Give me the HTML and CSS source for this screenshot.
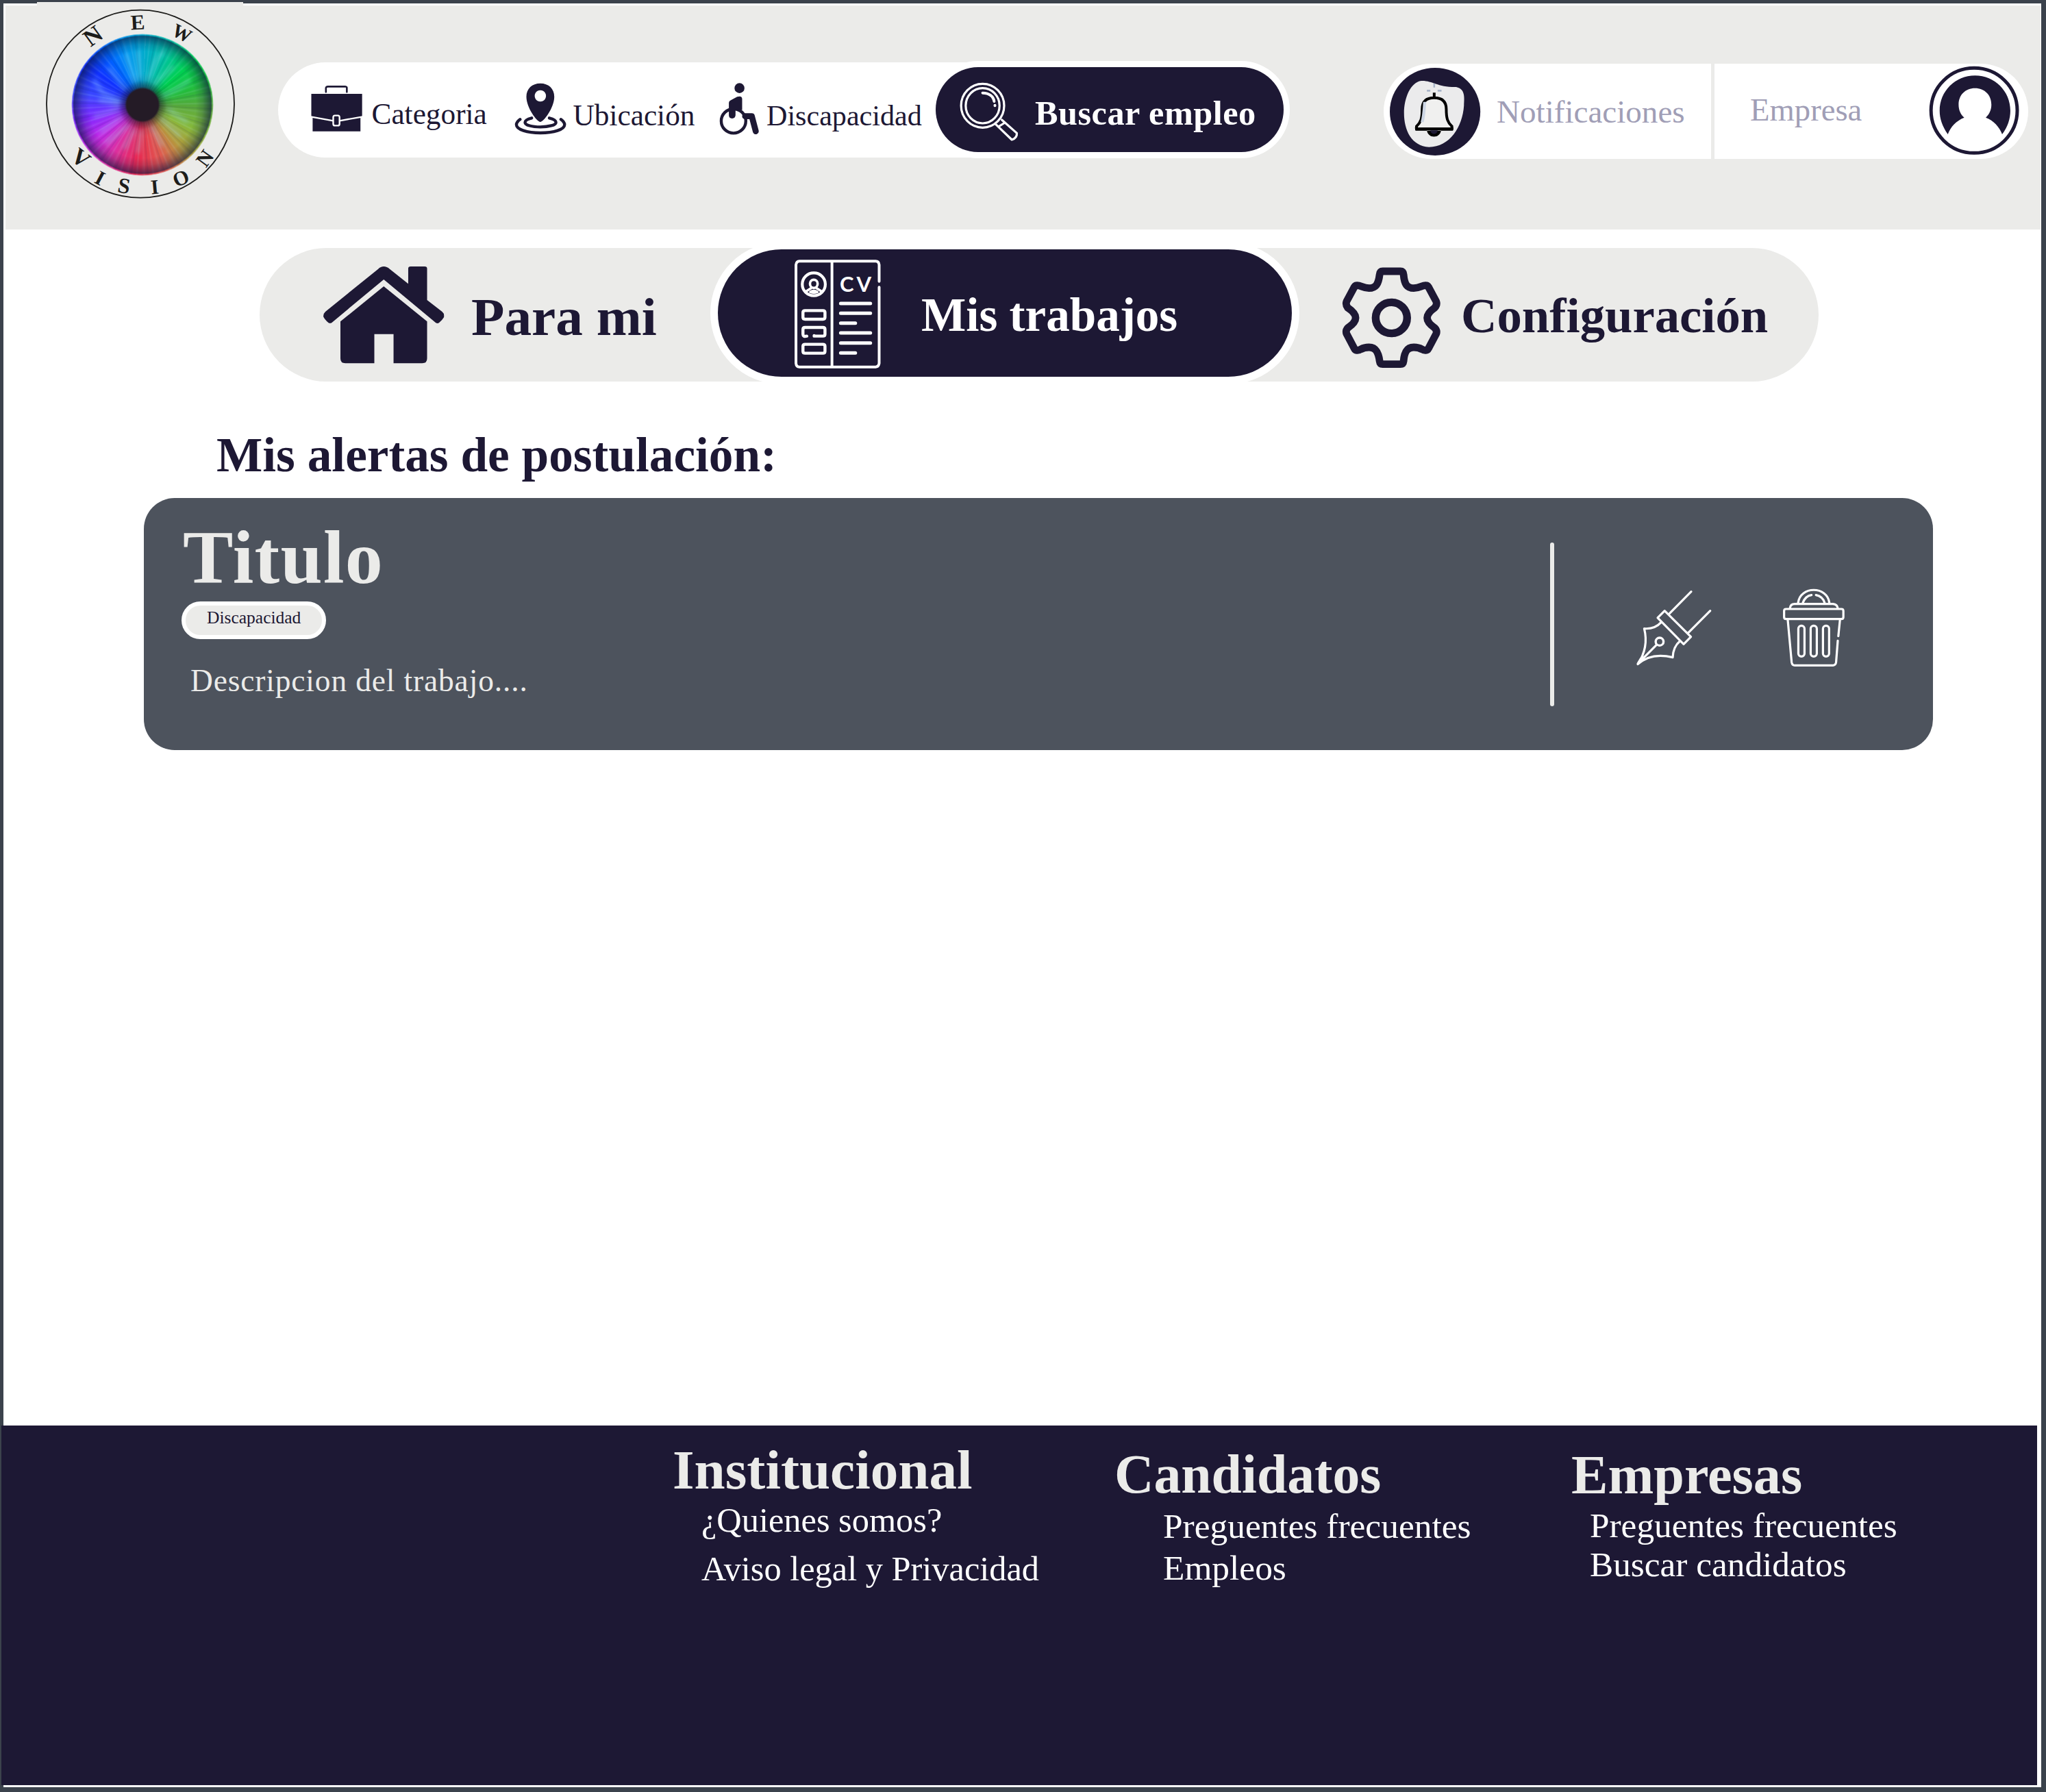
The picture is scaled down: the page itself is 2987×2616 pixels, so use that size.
FILE: index.html
```html
<!DOCTYPE html>
<html lang="es">
<head>
<meta charset="utf-8">
<title>New Vision - Mis trabajos</title>
<link rel="stylesheet" href="styles.css">
</head>
<body>
<div class="page">
  <header class="header">
    <a class="logo">
      <span class="iris"></span>
      <svg class="logo-ring" width="301" height="332" viewBox="54 3 301 332">
        <circle cx="205" cy="151.7" r="137" fill="none" stroke="#1c1c1a" stroke-width="1.8"/>
        <g class="iris-fibers">
          <path d="M196 118L184 80M204 114L201 76M216 116L228 88L238 76M226 122L252 98M238 140L262 128L276 118M246 160L272 178M236 174L262 198M222 186L236 212M206 192L201 222M196 190L182 216M186 184L156 208M176 172L148 192M172 160L138 170M174 148L150 136L138 118M182 130L160 100M172 152L146 146"/>
        </g>
        <g class="logo-letters">
          <text transform="translate(136 53) rotate(-36)" y="11" font-size="35">N</text>
          <text transform="translate(201 33) rotate(-3)" y="10" font-size="31">E</text>
          <text transform="translate(266 48) rotate(27)" y="10" font-size="28">W</text>
          <text transform="translate(118 231) rotate(38)" y="11" font-size="34">V</text>
          <text transform="translate(146 260) rotate(28)" y="10">I</text>
          <text transform="translate(181 272) rotate(10)" y="10" font-size="32">S</text>
          <text transform="translate(226 273) rotate(-5)" y="10">I</text>
          <text transform="translate(264 260) rotate(-22)" y="10">O</text>
          <text transform="translate(299 231) rotate(-54)" y="10" font-size="30">N</text>
        </g>
      </svg>
    </a>

    <nav class="filters">
      <a class="filter filter-category">
        <svg width="75" height="68"><g transform="scale(.4848 .3333) translate(-131 -165)">
          <path class="line" stroke-width="2.6" d="M176 193V175Q177 169 182 169H234Q239 170 239 175V193"/>
          <path d="M132 201H285V299L280 302V365H136V302L132 299Z"/>
          <path class="line paper" stroke-width="2.4" d="M130 301L198 319M217 319L287 301"/>
          <rect class="paper-line" x="198" y="296" width="19" height="44" rx="5" ry="8" stroke-width="2.4"/>
        </g></svg>
        <span>Categoria</span>
      </a>
      <a class="filter filter-place">
        <svg width="75" height="76"><g transform="scale(.4848 .3333) translate(-746 -153)">
          <path fill-rule="evenodd" d="M822 324C812 324 780 262 780 214C780 178 797 155 822 155C847 155 864 178 864 214C864 262 832 324 822 324ZM822 185a17 25 0 1 0 .1 0Z"/>
          <path class="line" stroke-width="4.4" d="M796 307Q776 314 776 326C776 338 797 346 822 346C847 346 869 338 869 326Q869 314 849 307"/>
          <path class="line" stroke-width="4.4" d="M761 313Q750 325 750 336C750 357 782 372 822 372C863 372 895 357 895 336Q895 325 884 313"/>
        </g></svg>
        <span>Ubicación</span>
      </a>
      <a class="filter filter-disability">
        <svg width="58" height="76"><g transform="scale(.4848 .3333) translate(-1364 -153)">
          <ellipse cx="1423" cy="176" rx="15" ry="22"/>
          <ellipse class="line" cx="1405" cy="320" rx="37" ry="53" stroke-width="4.4"/>
          <path d="M1391 240Q1391 233 1397 229L1416 214Q1431 208 1431 224V272L1411 268V295Q1410 309 1401 309Q1391 309 1391 295Z"/>
          <path class="line" stroke-width="8.8" d="M1440 299H1460L1472 365"/>
        </g></svg>
        <span>Discapacidad</span>
      </a>
      <button class="search">
        <svg width="84" height="86"><g transform="scale(.5612 .3333) translate(-664 -154)">
          <ellipse class="line" cx="722" cy="254" rx="56" ry="96" stroke-width="3.2"/>
          <ellipse class="line" cx="722" cy="254" rx="44" ry="77" stroke-width="3.2"/>
          <path class="line" stroke-width="4" d="M722 198C739 199 750 213 752 235M754 252v2"/>
          <path class="line" stroke-width="3.2" d="M756 335L798 403Q812 395 811 374L772 316M763 346L780 328"/>
        </g></svg>
        <span>Buscar empleo</span>
      </button>
    </nav>

    <div class="account">
      <a class="notifications">
        <svg width="133" height="129"><g transform="scale(.6294 .3333) translate(-46 -87)">
          <ellipse cx="151" cy="279" rx="105" ry="192"/>
          <path fill="#ebebec" d="M79 285C79 220 94 150 119 144C145 142 155 172 200 171C221 180 219 215 218 252C215 345 185 434 137 434C96 430 79 360 79 285Z"/>
          <path class="bell" d="M149 218C128 218 121 240 121 268C121 310 118 325 108 343V355H190V343C180 325 177 310 177 268C177 240 170 218 149 218ZM149 196V216"/>
          <path fill="none" stroke="#cdd6e4" stroke-width="7" d="M127 236Q125 300 121 325"/>
          <path fill="#000" d="M104 349H194L192 362H106ZM132 360C134 398 163 398 165 360Z"/>
          <path d="M140 361C141 382 156 382 157 361Z"/>
          <path fill="#a9b5c9" d="M132 183h8v8h-8zM157 183h9v8h-9zM147 155h4v18h-4z"/>
        </g></svg>
        <span>Notificaciones</span>
      </a>
      <a class="company">
        <span>Empresa</span>
        <svg width="133" height="130"><g transform="scale(.6294 .3333) translate(-1296 -81)">
          <ellipse class="line" cx="1401" cy="274" rx="100" ry="186" stroke-width="5"/>
          <path d="M1340 378C1327 342 1321 310 1321 275C1321 190 1357 121 1403 121C1449 121 1485 190 1485 275C1485 310 1479 345 1466 378C1460 348 1446 316 1428 305C1437 288 1441 270 1441 248C1441 205 1425 176 1403 176C1381 176 1365 205 1365 248C1365 270 1369 290 1378 305C1360 318 1346 346 1340 378Z"/>
        </g></svg>
      </a>
    </div>
  </header>

  <nav class="tabs">
    <a class="tab tab-home">
      <svg width="177" height="142"><g transform="scale(.5102 .3333) translate(-220 -147)">
        <path d="M393 147Q402 147 410 158L463 223V156Q463 147 470 147H510Q517 147 517 156V294L560 345Q567 353 565 370Q560 383 551 394Q547 398 542 394L393 204L245 392Q240 398 235 394Q222 376 220 365Q220 353 226 345L377 158Q384 147 393 147Z"/>
        <path d="M393 234L517 388V550Q517 571 503 571H421V443H366V571H283Q269 571 269 550V388Z"/>
      </g></svg>
      <span>Para mi</span>
    </a>
    <a class="tab tab-jobs">
      <svg width="128" height="160">
        <g transform="scale(.5102 .3333) translate(-254 -115)">
          <path class="line" stroke-width="4" d="M498 210V138Q497 122 488 122H270Q261 123 260 138V569Q261 585 270 585H488Q497 584 498 569V236M363 122V585"/>
          <ellipse class="line" cx="311" cy="223" rx="33" ry="50" stroke-width="4.2"/>
          <ellipse class="line" cx="311" cy="221" rx="11" ry="18" stroke-width="3.6"/>
          <path class="line" stroke-width="3.6" d="M287 256L303 240M335 256L319 240M301 257Q311 246 321 257Q311 262 301 257"/>
          <path class="line" stroke-width="4.4" d="M286 338H337Q343 338 343 346V368Q343 376 337 376H286Q280 376 280 368V346Q280 338 286 338ZM291 450Q280 454 280 442V420Q280 412 286 412H337Q343 412 343 420V442Q343 450 337 450H312V448M286 486H337Q343 486 343 494V517Q343 525 337 525H286Q280 525 280 517V494Q280 486 286 486Z"/>
          <path class="line" stroke-width="5" d="M388 307H473M388 350H473M388 393H430M388 436H473M388 480H473M388 524H430"/>
        </g>
        <text class="cv" x="67" y="47">CV</text>
      </svg>
      <span>Mis trabajos</span>
    </a>
    <a class="tab tab-settings">
      <svg width="145" height="148"><g transform="scale(.574 .3333) translate(-242 -149)">
        <path class="line" stroke-width="10.8" d="M338 182Q339 167 346 167H391Q398 167 399 182C401 225 408 241 425 241C440 241 447 227 456 229Q460 229 462 235L482 299Q485 313 478 327Q459 350 459 371Q459 392 478 415Q485 427 482 441L462 506Q460 513 456 513Q450 514 446 509Q437 500 425 500C408 500 401 520 399 560Q398 574 391 574H346Q339 574 338 560C335 520 328 500 311 500Q299 500 290 509Q286 514 280 513Q276 512 274 506L254 441Q251 427 257 415Q277 392 277 371Q277 350 257 327Q251 313 254 299L274 235Q276 229 280 229C289 227 296 241 311 241C328 241 335 225 338 182Z"/>
        <ellipse class="line" cx="368" cy="371" rx="40" ry="68" stroke-width="11.4"/>
      </g></svg>
      <span>Configuración</span>
    </a>
  </nav>

  <main class="main">
    <h1 class="heading">Mis alertas de postulación:</h1>
    <article class="card">
      <div class="card-info">
        <h2 class="card-title">Titulo</h2>
        <span class="chip">Discapacidad</span>
        <p class="card-text">Descripcion del trabajo....</p>
      </div>
      <div class="card-actions">
        <svg width="110" height="112"><g transform="scale(.4082 .3333) translate(-389 -485)">
          <path class="line" stroke-width="3.2" d="M508 585L585 490M573 672L653 574M490 574L584 688L558 720L465 605ZM477 625Q455 655 417 652Q434 735 394 808Q442 755 519 778Q520 732 545 706M461 723L394 806"/>
          <path class="line" stroke-width="3.2" d="M396 802L404 785L410 792Z"/>
          <ellipse class="line" cx="472" cy="709" rx="14" ry="17" stroke-width="3.4"/>
        </g></svg>
        <svg width="90" height="115"><g transform="scale(.4082 .3333) translate(-913 -480)">
          <path class="line" stroke-width="3.2" d="M967 540C975 465 1071 465 1079 540M984 540Q993 510 1015 506M1031 506Q1055 512 1062 540M938 563Q940 545 955 545H1092Q1107 547 1109 563M924 567H1122Q1129 567 1129 575V603Q1129 611 1122 611H924Q917 611 917 603V575Q917 567 924 567ZM930 613L944 800Q946 814 955 814H1092Q1102 813 1103 800L1109 706M1111 686L1117 613"/>
          <g stroke-width="3.2">
            <rect class="line" x="968" y="640" width="22" height="135" rx="11" ry="13"/>
            <rect class="line" x="1012" y="640" width="22" height="135" rx="11" ry="13"/>
            <rect class="line" x="1056" y="640" width="22" height="135" rx="11" ry="13"/>
          </g>
        </g></svg>
      </div>
    </article>
  </main>

  <footer class="footer">
    <section class="links links-about">
      <h3>Institucional</h3>
      <a>¿Quienes somos?</a>
      <a>Aviso legal y Privacidad</a>
    </section>
    <section class="links links-candidates">
      <h3>Candidatos</h3>
      <a>Preguentes frecuentes</a>
      <a>Empleos</a>
    </section>
    <section class="links links-companies">
      <h3>Empresas</h3>
      <a>Preguentes frecuentes</a>
      <a>Buscar candidatos</a>
    </section>
  </footer>
</div>
</body>
</html>
```
FILE: styles.css
```css
:root {
  --navy: #1d1834;
  --fog: #ebebe9;
  --slate: #4d535d;
  --frame: #3b424c;
  --muted: #a09eb6;
}

* { box-sizing: border-box; }

body {
  margin: 0;
  background: #fff;
  color: var(--navy);
  font-family: "Liberation Serif", "Times New Roman", serif;
  line-height: 1;
}

h1, h2, h3, p { margin: 0; }
a, span, h1, h2, h3, p { white-space: nowrap; }
svg { display: block; flex: none; overflow: visible; fill: currentColor; }

.line {
  fill: none;
  stroke: currentColor;
  stroke-linecap: round;
  stroke-linejoin: round;
  vector-effect: non-scaling-stroke;
}
.paper { stroke: #fff; }
.paper-line { stroke: #fff; vector-effect: non-scaling-stroke; }

.page {
  width: 2987px;
  height: 2616px;
  display: flex;
  flex-direction: column;
  border: solid var(--frame);
  border-width: 5px 7px 7px 5px;
}

/* Header */
.header {
  display: flex;
  align-items: flex-start;
  height: 327px;
  margin: 3px 1px 0 3px;
  background: var(--fog);
}

.logo {
  position: relative;
  flex: none;
  width: 301px;
  height: 332px;
  margin: -5px 0 0 46px;
  background: var(--fog);
}
.logo-ring { position: relative; }
.logo-letters {
  fill: #1c1c1a;
  font-size: 30px;
  font-weight: bold;
  text-anchor: middle;
}
.iris-fibers {
  fill: none;
  stroke: #9fe4ff;
  stroke-width: 5;
  stroke-linecap: round;
  stroke-linejoin: round;
  opacity: .38;
  filter: blur(3px);
}
.iris {
  position: absolute;
  left: 50px;
  top: 46px;
  width: 208px;
  height: 208px;
  border-radius: 50%;
  background:
    radial-gradient(circle, #241b26 0 23px, rgba(25, 20, 40, .55) 26px, rgba(20, 20, 60, .12) 36px, transparent 46px, transparent 78px, rgba(10, 20, 60, .18) 88px, rgba(10, 20, 60, .6) 100px, rgba(10, 20, 60, 0) 102px),
    repeating-conic-gradient(from 3deg, transparent 0 2deg, rgba(200, 240, 255, .12) 3.5deg, transparent 5deg 7deg, rgba(0, 20, 80, .1) 8deg, transparent 10deg, rgba(200, 240, 255, .1) 11deg, transparent 13.7deg),
    conic-gradient(#00a8d0, #00c0a0 25deg, #00d050 50deg, #18c03c 68deg, #58a83c 92deg, #86b93a 115deg, #b39a3c 138deg, #e05a50 160deg, #e82850 185deg, #dc30a0 210deg, #c028e8 235deg, #7a28ff 258deg, #3c48ff 280deg, #1030ff 305deg, #0060ff 325deg, #0094f0 342deg, #00a8d0);
  -webkit-mask: radial-gradient(circle, #000 102px, transparent 104px);
  mask: radial-gradient(circle, #000 102px, transparent 104px);
}

.filters {
  display: flex;
  align-items: flex-start;
  width: 1475px;
  height: 139px;
  margin: 83px 0 0 51px;
  padding-left: 47.5px;
  border-radius: 70px;
  background: #fff;
}
.filter { display: flex; align-items: flex-start; font-size: 43.3px; }
.filter-category { width: 298px; gap: 14px; }
.filter-category svg { margin-top: 34px; }
.filter-category span { margin-top: 54px; }
.filter-place { width: 299.5px; gap: 10px; }
.filter-place svg { margin-top: 30px; }
.filter-place span { margin-top: 56px; }
.filter-disability { width: 315px; gap: 10px; font-size: 42.1px; }
.filter-disability svg { margin-top: 30px; }
.filter-disability span { margin-top: 57px; }

.search {
  display: flex;
  align-items: flex-start;
  width: 508px;
  height: 124px;
  margin-top: 7px;
  padding: 0 0 0 36px;
  gap: 25px;
  border: 0;
  border-radius: 62px;
  background: var(--navy);
  box-shadow: 0 0 0 9px #fff;
  color: #fff;
  font: bold 50.3px/1 "Liberation Serif", "Times New Roman", serif;
  letter-spacing: .5px;
}
.search svg { margin-top: 23px; }
.search span { margin-top: 42px; }

.account {
  display: flex;
  width: 941px;
  height: 139px;
  margin: 85px 0 0 139px;
  border-radius: 70px;
  background: #fff;
}
.notifications, .company { display: flex; align-items: flex-start; color: var(--navy); }
.notifications {
  width: 483px;
  padding: 6px 0 0 9px;
  gap: 23px;
  border-right: 5px solid var(--fog);
}
.notifications span { margin-top: 41px; color: var(--muted); font-size: 47.1px; }
.bell {
  fill: #f0f0ef;
  stroke: #000;
  stroke-width: 4;
  vector-effect: non-scaling-stroke;
}
.company { flex: 1; justify-content: space-between; padding: 4px 12px 0 52px; }
.company span { margin-top: 40px; color: var(--muted); font-size: 46.7px; }

/* Section tabs */
.tabs {
  display: flex;
  align-items: flex-start;
  width: 2276px;
  height: 195px;
  margin: 27px 0 0 374px;
  border-radius: 98px;
  background: var(--fog);
}
.tab { display: flex; align-items: flex-start; font-weight: bold; }
.tab-home { width: 669px; padding-left: 93px; gap: 39px; font-size: 79.3px; }
.tab-home svg { margin-top: 27px; }
.tab-home span { margin-top: 61px; }
.tab-jobs {
  width: 838px;
  height: 186px;
  margin-top: 2px;
  padding-left: 111px;
  gap: 58px;
  border-radius: 93px;
  background: var(--navy);
  box-shadow: 0 0 0 11px #fff;
  color: #fff;
  font-size: 69.1px;
}
.tab-jobs svg { margin-top: 15px; }
.tab-jobs span { margin-top: 61px; }
.cv { font: bold 31px/1 Lato, sans-serif; letter-spacing: 4px; }
.tab-settings { padding-left: 73px; gap: 29px; font-size: 72.7px; }
.tab-settings svg { margin-top: 28px; }
.tab-settings span { margin-top: 63px; }

/* Alerts */
.main { flex: 1; }
.heading { margin: 71px 0 0 311px; font-size: 71.3px; }

.card {
  display: flex;
  align-items: center;
  justify-content: space-between;
  width: 2612px;
  height: 368px;
  margin: 28px 0 0 205px;
  border-radius: 45px;
  background: var(--slate);
  color: var(--fog);
}
.card-info {
  display: flex;
  flex-direction: column;
  align-items: flex-start;
  align-self: flex-start;
  padding: 32px 0 0 55px;
}
.card-title { margin-left: 2px; font-size: 110px; letter-spacing: 1.3px; }
.chip {
  width: 211px;
  height: 55px;
  margin-top: 9px;
  padding: 5px 0 0 31px;
  border: 6px solid #fff;
  border-radius: 28px;
  background: var(--fog);
  color: var(--navy);
  font-size: 25.5px;
}
.card-text { margin: 39px 0 0 13px; font-size: 45.4px; letter-spacing: .88px; }

.card-actions {
  display: flex;
  align-items: center;
  gap: 104px;
  height: 239px;
  width: 559px;
  color: #fff;
}
.card-actions svg { margin-top: 13px; }
.card-actions::before {
  content: "";
  width: 6px;
  height: 239px;
  margin-right: 16px;
  border-radius: 3px;
  background: var(--fog);
}

/* Footer */
.footer {
  display: grid;
  grid-template-columns: 645px 667px 1fr;
  height: 525px;
  margin: 0 6px 3px -3px;
  padding-left: 980px;
  background: var(--navy);
  color: #fff;
}
.links { display: flex; flex-direction: column; align-items: flex-start; }
.links h3 { color: var(--fog); }
.links-about { padding-top: 25px; }
.links-about h3 { margin-bottom: 7px; font-size: 81.2px; }
.links-about a { margin: 0 0 20px 42px; font-size: 50.4px; }
.links-candidates { padding-top: 32px; }
.links-candidates h3 { margin-bottom: 9px; font-size: 79.6px; }
.links-candidates a { margin: 0 0 10px 71px; font-size: 51.4px; }
.links-companies { padding-top: 32px; }
.links-companies h3 { margin-bottom: 8px; font-size: 80.2px; }
.links-companies a { margin: 0 0 5px 27px; font-size: 51.3px; }
```
